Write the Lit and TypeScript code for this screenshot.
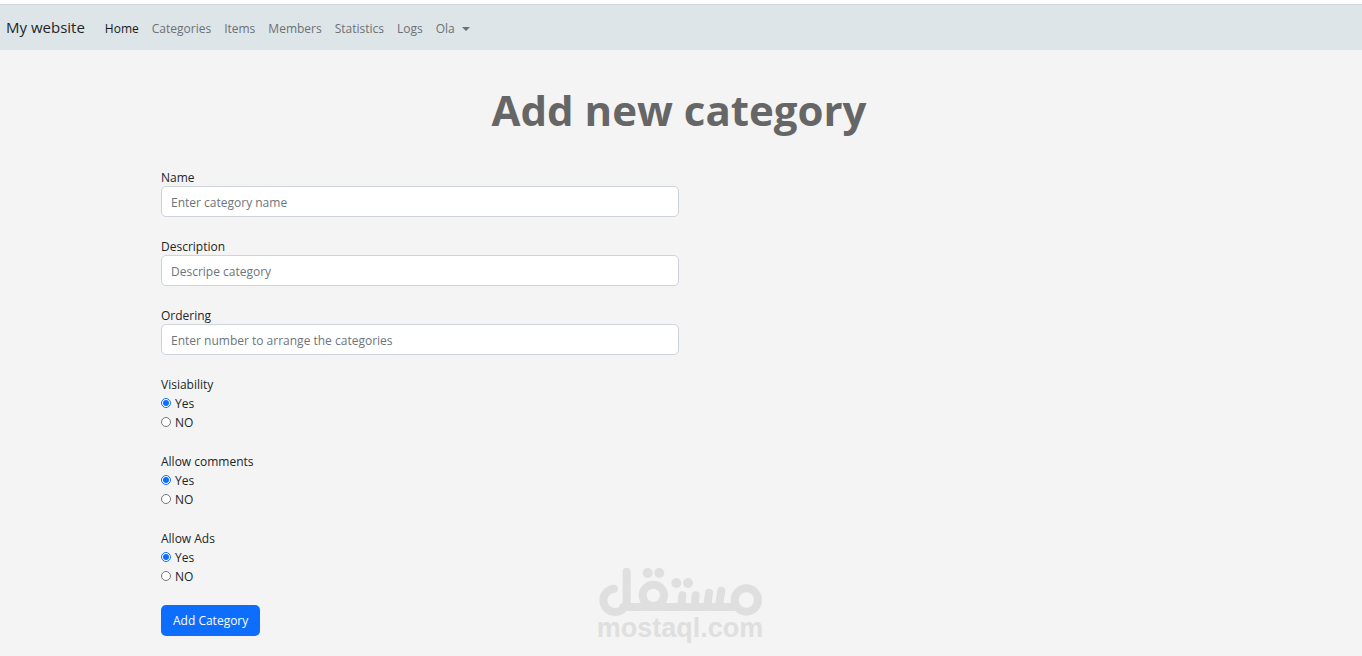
import { LitElement, html, css } from "lit";
import { customElement } from "lit/decorators.js";

interface TextField {
  id: string;
  label: string;
  placeholder: string;
}

interface ChoiceField {
  name: string;
  label: string;
}

const LINKS = ["Home", "Categories", "Items", "Members", "Statistics", "Logs"];

const TEXT_FIELDS: TextField[] = [
  { id: "name", label: "Name", placeholder: "Enter category name" },
  { id: "description", label: "Description", placeholder: "Descripe category" },
  { id: "ordering", label: "Ordering", placeholder: "Enter number to arrange the categories" },
];

const CHOICES: ChoiceField[] = [
  { name: "visibility", label: "Visiability" },
  { name: "comments", label: "Allow comments" },
  { name: "ads", label: "Allow Ads" },
];

@customElement("site-nav")
export class SiteNav extends LitElement {
  static styles = css`
    :host {
      display: block;
    }
    .bar {
      display: flex;
      align-items: center;
      gap: 20px;
      height: 45px;
      padding: 0 6px;
      border-top: 1px solid #d5d8da;
      background: #dee5e8;
    }
    .brand {
      padding-bottom: 2px;
      font-size: 15px;
      line-height: 24px;
      color: #212529;
      text-decoration: none;
    }
    .links {
      display: flex;
      gap: 13px;
      margin: 2px 0 0;
      padding: 0;
      list-style: none;
    }
    .link {
      display: flex;
      align-items: center;
      padding: 0;
      border: 0;
      background: none;
      font: inherit;
      color: #6b7175;
      text-decoration: none;
    }
    .current {
      color: #16191b;
    }
    .caret {
      margin-left: 7px;
      border-top: 4px solid currentColor;
      border-left: 4px solid transparent;
      border-right: 4px solid transparent;
    }
  `;

  render() {
    return html`
      <nav class="bar">
        <a class="brand" href="#">My website</a>
        <ul class="links">
          ${LINKS.map(
            (text, i) => html`<li><a class="link ${i === 0 ? "current" : ""}" href="#">${text}</a></li>`,
          )}
          <li>
            <button class="link" type="button" aria-haspopup="true">Ola<span class="caret"></span></button>
          </li>
        </ul>
      </nav>
    `;
  }
}

@customElement("site-watermark")
export class SiteWatermark extends LitElement {
  static styles = css`
    :host {
      display: flex;
      flex-direction: column;
      align-items: center;
      width: 180px;
      color: #dfdfdf;
      pointer-events: none;
    }
    .mark {
      display: block;
      width: 180px;
      height: 57px;
    }
    .domain {
      font: bold 27px/22px "Liberation Sans", Arial, sans-serif;
    }
  `;

  render() {
    return html`
      <svg class="mark" viewBox="0 0 540 171" fill="none" stroke="currentColor" stroke-width="24" stroke-linecap="round" aria-hidden="true">
        <path d="M72 86a35 35 0 1 0 38 33V35" />
        <path d="M100 141H440" />
        <circle cx="190" cy="106" r="32" />
        <circle cx="469" cy="120" r="35" />
        <path d="M277 106l-3 30M317 106l-3 30M357 98l-5 38M394 92l-7 44" />
        <g fill="currentColor" stroke="none">
          <circle cx="173" cy="39" r="15" />
          <circle cx="208" cy="39" r="15" />
          <circle cx="259" cy="69" r="15" />
          <circle cx="294" cy="69" r="15" />
        </g>
      </svg>
      <span class="domain">mostaql.com</span>
    `;
  }
}

@customElement("app-root")
export class AppRoot extends LitElement {
  static styles = css`
    :host {
      display: block;
      position: relative;
      box-sizing: border-box;
      min-height: 100vh;
      padding-top: 4px;
      background: linear-gradient(#fff 4px, #f4f4f4 4px);
      font: 12px/19px "Open Sans", "Noto Sans", sans-serif;
      color: #212529;
    }
    .page {
      box-sizing: border-box;
      max-width: 1058px;
      margin: 0 auto;
      padding: 27px 13px 20px 9px;
    }
    .title {
      margin: 0 0 24px;
      font-size: 42px;
      line-height: 66px;
      font-weight: 700;
      text-align: center;
      color: #666;
    }
    .form {
      display: grid;
      gap: 19px;
      justify-items: start;
    }
    .field {
      width: 50%;
    }
    .caption {
      display: block;
      padding-top: 3px;
      line-height: 16px;
    }
    .input {
      display: block;
      box-sizing: border-box;
      width: 100%;
      height: 31px;
      padding: 1px 9px 0;
      border: 1px solid #ced4da;
      border-radius: 5px;
      background: #fff;
      font: inherit;
      color: #212529;
    }
    .input::placeholder {
      color: #6c757d;
      opacity: 1;
    }
    .group {
      margin: 0;
      padding: 0;
      border: 0;
    }
    .legend {
      padding: 1px 0 0;
    }
    .option {
      display: flex;
      align-items: center;
      gap: 4px;
    }
    .radio {
      width: 10px;
      height: 10px;
      margin: 0 0 2px;
      accent-color: #0d6efd;
    }
    .submit {
      height: 31px;
      padding: 0 12px;
      border: 0;
      border-radius: 5px;
      background: #0d6efd;
      font: inherit;
      color: #fff;
    }
    .watermark {
      position: absolute;
      top: 560px;
      left: 50%;
      margin-left: -91px;
    }
  `;

  render() {
    return html`
      <site-nav></site-nav>
      <main class="page">
        <h1 class="title">Add new category</h1>
        <form class="form" @submit=${(e: Event) => e.preventDefault()}>
          ${TEXT_FIELDS.map(
            (f) => html`
              <div class="field">
                <label class="caption" for=${f.id}>${f.label}</label>
                <input class="input" id=${f.id} type="text" placeholder=${f.placeholder} />
              </div>
            `,
          )}
          ${CHOICES.map(
            (c) => html`
              <fieldset class="group">
                <legend class="legend">${c.label}</legend>
                <label class="option"><input class="radio" type="radio" name=${c.name} value="yes" checked />Yes</label>
                <label class="option"><input class="radio" type="radio" name=${c.name} value="no" />NO</label>
              </fieldset>
            `,
          )}
          <button class="submit" type="submit">Add Category</button>
        </form>
      </main>
      <site-watermark class="watermark"></site-watermark>
    `;
  }
}
